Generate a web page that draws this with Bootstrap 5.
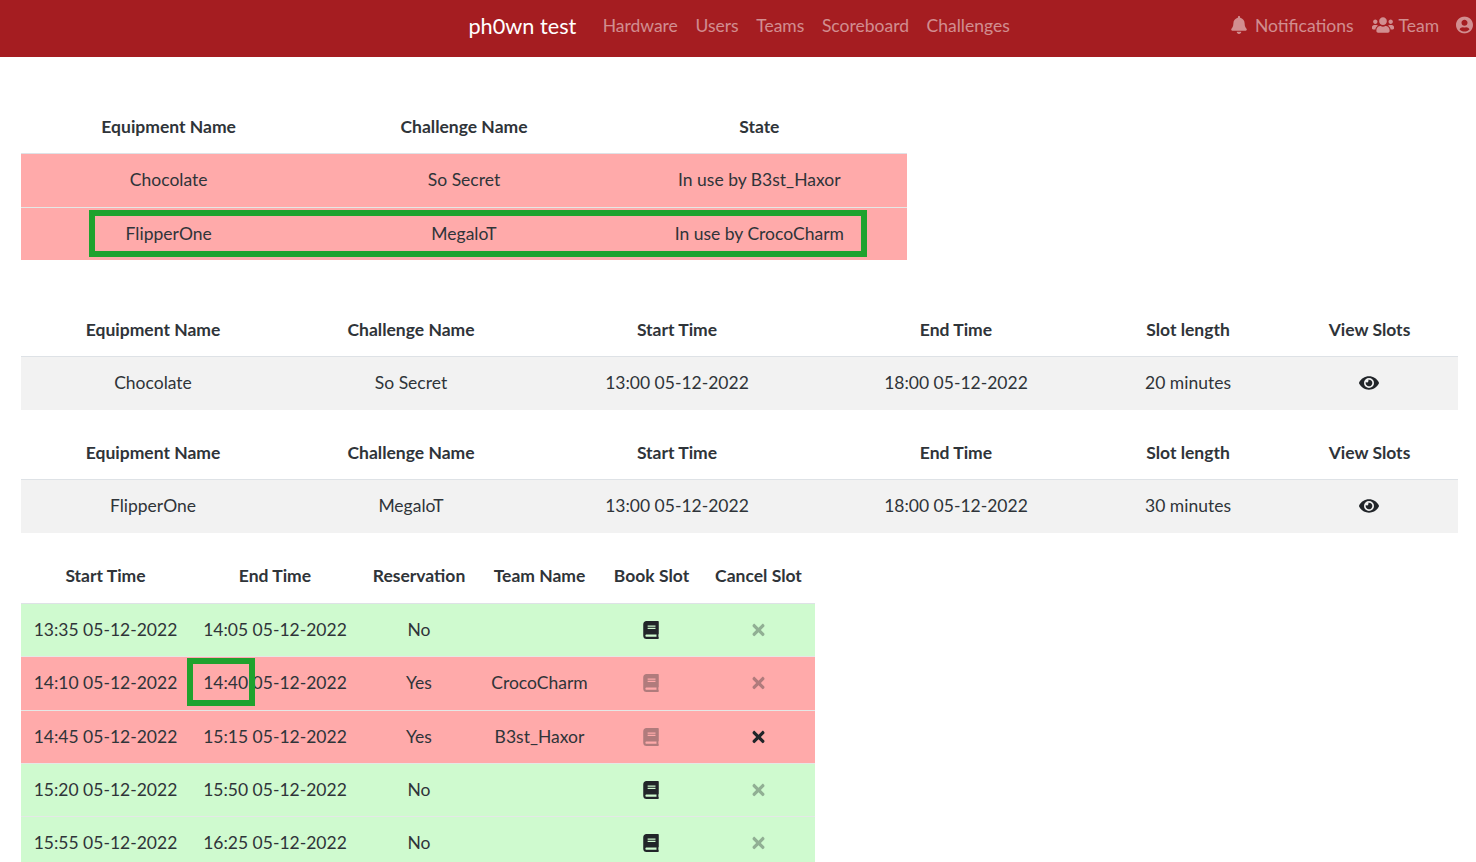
<!DOCTYPE html>
<html lang="en">
<head>
    <meta charset="UTF-8">
    <meta name="viewport" content="width=device-width, initial-scale=1.0">
    <title>ph0wn test - Hardware</title>

    <link rel="stylesheet" href="https://cdn.jsdelivr.net/npm/bootstrap@5.3.0/dist/css/bootstrap.min.css">

    <style>
        html, body {
            height: 862px;
            overflow: hidden;
        }
        body {
            font-family: "Lato", "Liberation Sans", sans-serif;
            font-size: 17.5px;
            color: #2f3439;
        }
        .top-bar {
            background-color: #a51d21;
            height: 57px;
            padding: 0 3px 5px 0;
            font-size: 17.5px;
        }
        .bar-side {
            flex: 1 1 0;
        }
        .bar-middle {
            padding-left: 14px;
        }
        .top-bar .navbar-brand {
            font-size: 21.7px;
            color: #fff;
            margin-right: 17.5px;
            padding: 0;
        }
        .top-bar .nav-link {
            color: rgba(255, 255, 255, 0.5);
            padding: 0 8.8px;
        }
        .top-bar .nav-link.user-link {
            padding: 0 0 0 8px;
        }
        .right-link {
            margin: 0 0.2px;
        }
        .nav-ico {
            height: 18px;
            fill: currentColor;
            vertical-align: -2px;
        }
        .ico-gap-lg { margin-right: 8px; }
        .ico-gap-sm { margin-right: 5px; }
        .page-wrap {
            padding: 44px 18px 0 21px;
        }
        .slot-table {
            table-layout: fixed;
            text-align: center;
            margin-bottom: 0;
            color: #2f3439;
            --bs-table-bg: transparent;
            --bs-table-color: #2f3439;
        }
        .slot-table th, .slot-table td {
            padding: 13px 0;
            vertical-align: middle;
        }
        .slot-table thead th {
            border-bottom: 1px solid #dee2e6;
            font-weight: 700;
        }
        .slot-table tbody td {
            border-bottom: 1px solid #e4e8e6;
        }
        .slot-table tbody tr:last-child td {
            border-bottom-color: transparent;
        }
        .table-state { width: 886px; }
        .table-info { width: 1437px; }
        .table-slots { width: 794px; }
        .table-slots thead th { padding-bottom: 14px; }
        .gap-state { margin-bottom: 43px; }
        .gap-info { margin-bottom: 16.5px; }
        .row-red > td { background-color: #ffaaaa; }
        .row-green > td { background-color: #cffacf; }
        .row-grey > td { background-color: #f2f2f2; }
        .c-state { width: 295.33px; }
        .c-i1 { width: 264px; }
        .c-i2 { width: 252px; }
        .c-i3 { width: 280px; }
        .c-i4 { width: 278px; }
        .c-i5 { width: 186px; }
        .c-i6 { width: 177px; }
        .c-s1 { width: 169px; }
        .c-s2 { width: 170px; }
        .c-s3 { width: 118px; }
        .c-s4 { width: 123px; }
        .c-s5 { width: 101px; }
        .c-s6 { width: 113px; }
        .act-ico {
            height: 18px;
            fill: #212529;
            vertical-align: -3px;
        }
        .act-off { opacity: 0.35; }
        .act-nudge { margin-right: 2px; }
        .mark-box {
            position: absolute;
            border: 6px solid #1fa22e;
            pointer-events: none;
        }
        .mark-row {
            left: 89px;
            top: 153px;
            width: 778px;
            height: 47px;
        }
        .mark-cell {
            left: 187px;
            top: 601px;
            width: 68px;
            height: 48px;
        }
    </style>
</head>
<body>

    <svg class="d-none" xmlns="http://www.w3.org/2000/svg">
        <symbol id="i-bell" viewBox="0 0 448 512"><path d="M224 512c35.32 0 63.97-28.65 63.97-64H160.03c0 35.35 28.65 64 63.97 64zm215.39-149.71c-19.32-20.76-55.47-51.99-55.47-154.29 0-77.7-54.48-139.9-127.94-155.16V32c0-17.67-14.32-32-31.98-32s-31.98 14.33-31.98 32v20.84C118.56 68.1 64.08 130.3 64.08 208c0 102.3-36.15 133.53-55.47 154.29-6 6.45-8.66 14.16-8.61 21.71.11 16.4 12.98 32 32.1 32h383.8c19.12 0 32-15.6 32.1-32 .05-7.55-2.61-15.27-8.61-21.71z"/></symbol>
        <symbol id="i-users" viewBox="0 0 640 512"><path d="M96 224c35.3 0 64-28.7 64-64s-28.7-64-64-64-64 28.7-64 64 28.7 64 64 64zm448 0c35.3 0 64-28.7 64-64s-28.7-64-64-64-64 28.7-64 64 28.7 64 64 64zm32 32h-64c-17.6 0-33.5 7.1-45.1 18.6 40.3 22.1 68.9 62 75.1 109.4h66c17.7 0 32-14.3 32-32v-32c0-35.3-28.7-64-64-64zm-256 0c61.9 0 112-50.1 112-112S381.9 32 320 32 208 82.1 208 144s50.1 112 112 112zm76.8 32h-8.3c-20.8 10-43.9 16-68.5 16s-47.6-6-68.5-16h-8.3C179.6 288 128 339.6 128 403.2V432c0 26.5 21.5 48 48 48h288c26.5 0 48-21.5 48-48v-28.8c0-63.6-51.6-115.2-115.2-115.2zm-223.7-13.4C161.5 263.1 145.6 256 128 256H64c-35.3 0-64 28.7-64 64v32c0 17.7 14.3 32 32 32h65.9c6.3-47.4 34.9-87.3 75.2-109.4z"/></symbol>
        <symbol id="i-user" viewBox="0 0 496 512"><path d="M248 8C111 8 0 119 0 256s111 248 248 248 248-111 248-248S385 8 248 8zm0 96c48.6 0 88 39.4 88 88s-39.4 88-88 88-88-39.4-88-88 39.4-88 88-88zm0 344c-58.7 0-111.3-26.6-146.5-68.2 18.8-35.4 55.6-59.8 98.5-59.8 2.4 0 4.8.4 7.1 1.1 13 4.2 26.6 6.9 40.9 6.9 14.3 0 28-2.7 40.9-6.9 2.3-.7 4.7-1.1 7.1-1.1 42.9 0 79.7 24.4 98.5 59.8C359.3 421.4 306.7 448 248 448z"/></symbol>
        <symbol id="i-eye" viewBox="0 0 576 512"><path d="M572.52 241.4C518.29 135.59 410.93 64 288 64S57.68 135.64 3.48 241.41a32.35 32.35 0 0 0 0 29.19C57.71 376.41 165.07 448 288 448s230.32-71.64 284.52-177.41a32.35 32.35 0 0 0 0-29.19zM288 400a144 144 0 1 1 144-144 143.93 143.93 0 0 1-144 144zm0-240a95.31 95.31 0 0 0-25.31 3.79 47.85 47.85 0 0 1-66.9 66.9A95.78 95.78 0 1 0 288 160z"/></symbol>
        <symbol id="i-book" viewBox="0 0 448 512"><path d="M448 360V24c0-13.3-10.7-24-24-24H96C43 0 0 43 0 96v320c0 53 43 96 96 96h328c13.3 0 24-10.7 24-24v-16c0-7.5-3.5-14.3-8.9-18.7-4.2-15.4-4.2-59.3 0-74.7 5.4-4.3 8.9-11.1 8.9-18.6zM128 134c0-3.3 2.7-6 6-6h212c3.3 0 6 2.7 6 6v20c0 3.3-2.7 6-6 6H134c-3.3 0-6-2.7-6-6v-20zm0 64c0-3.3 2.7-6 6-6h212c3.3 0 6 2.7 6 6v20c0 3.3-2.7 6-6 6H134c-3.3 0-6-2.7-6-6v-20zm253.4 250H96c-17.7 0-32-14.3-32-32 0-17.6 14.4-32 32-32h285.4c-1.9 17.1-1.9 46.9 0 64z"/></symbol>
        <symbol id="i-times" viewBox="0 0 352 512"><path d="M242.72 256l100.07-100.07c12.28-12.28 12.28-32.19 0-44.48l-22.24-22.24c-12.28-12.28-32.19-12.28-44.48 0L176 189.28 75.93 89.21c-12.28-12.28-32.19-12.28-44.48 0L9.21 111.45c-12.28 12.28-12.28 32.19 0 44.48L109.28 256 9.21 356.07c-12.28 12.28-12.28 32.19 0 44.48l22.24 22.24c12.28 12.28 32.2 12.28 44.48 0L176 322.72l100.07 100.07c12.28 12.28 32.2 12.28 44.48 0l22.24-22.24c12.28-12.28 12.28-32.19 0-44.48L242.72 256z"/></symbol>
    </svg>

    <!-- Navbar -->
    <nav class="navbar top-bar d-flex flex-nowrap align-items-center">
        <div class="bar-side"></div>
        <div class="bar-middle d-flex align-items-center">
            <a class="navbar-brand" href="#">ph0wn test</a>
            <ul class="navbar-nav flex-row">
                <li class="nav-item"><a class="nav-link" href="#">Hardware</a></li>
                <li class="nav-item"><a class="nav-link" href="#">Users</a></li>
                <li class="nav-item"><a class="nav-link" href="#">Teams</a></li>
                <li class="nav-item"><a class="nav-link" href="#">Scoreboard</a></li>
                <li class="nav-item"><a class="nav-link" href="#">Challenges</a></li>
            </ul>
        </div>
        <div class="bar-side d-flex justify-content-end">
            <ul class="navbar-nav flex-row">
                <li class="nav-item right-link"><a class="nav-link" href="#"><svg class="nav-ico ico-gap-lg" viewBox="0 0 448 512" width="16"><use href="#i-bell"/></svg>Notifications</a></li>
                <li class="nav-item right-link"><a class="nav-link" href="#"><svg class="nav-ico ico-gap-sm" viewBox="0 0 640 512" width="22"><use href="#i-users"/></svg>Team</a></li>
                <li class="nav-item"><a class="nav-link user-link" href="#"><svg class="nav-ico" viewBox="0 0 496 512" width="17"><use href="#i-user"/></svg></a></li>
            </ul>
        </div>
    </nav>

    <div class="page-wrap position-relative">

        <!-- Equipment state -->
        <table class="table slot-table table-state gap-state">
            <colgroup><col class="c-state"><col class="c-state"><col class="c-state"></colgroup>
            <thead>
                <tr><th>Equipment Name</th><th>Challenge Name</th><th>State</th></tr>
            </thead>
            <tbody>
                <tr class="row-red"><td>Chocolate</td><td>So Secret</td><td>In use by B3st_Haxor</td></tr>
                <tr class="row-red"><td>FlipperOne</td><td>MegaloT</td><td>In use by CrocoCharm</td></tr>
            </tbody>
        </table>

        <!-- Challenge slots -->
        <table class="table slot-table table-info gap-info">
            <colgroup><col class="c-i1"><col class="c-i2"><col class="c-i3"><col class="c-i4"><col class="c-i5"><col class="c-i6"></colgroup>
            <thead>
                <tr><th>Equipment Name</th><th>Challenge Name</th><th>Start Time</th><th>End Time</th><th>Slot length</th><th>View Slots</th></tr>
            </thead>
            <tbody>
                <tr class="row-grey"><td>Chocolate</td><td>So Secret</td><td>13:00 05-12-2022</td><td>18:00 05-12-2022</td><td>20 minutes</td><td><svg class="act-ico act-nudge" viewBox="0 0 576 512" width="20"><use href="#i-eye"/></svg></td></tr>
            </tbody>
        </table>

        <table class="table slot-table table-info gap-info">
            <colgroup><col class="c-i1"><col class="c-i2"><col class="c-i3"><col class="c-i4"><col class="c-i5"><col class="c-i6"></colgroup>
            <thead>
                <tr><th>Equipment Name</th><th>Challenge Name</th><th>Start Time</th><th>End Time</th><th>Slot length</th><th>View Slots</th></tr>
            </thead>
            <tbody>
                <tr class="row-grey"><td>FlipperOne</td><td>MegaloT</td><td>13:00 05-12-2022</td><td>18:00 05-12-2022</td><td>30 minutes</td><td><svg class="act-ico act-nudge" viewBox="0 0 576 512" width="20"><use href="#i-eye"/></svg></td></tr>
            </tbody>
        </table>

        <!-- Booking slots -->
        <table class="table slot-table table-slots">
            <colgroup><col class="c-s1"><col class="c-s2"><col class="c-s3"><col class="c-s4"><col class="c-s5"><col class="c-s6"></colgroup>
            <thead>
                <tr><th>Start Time</th><th>End Time</th><th>Reservation</th><th>Team Name</th><th>Book Slot</th><th>Cancel Slot</th></tr>
            </thead>
            <tbody>
                <tr class="row-green"><td>13:35 05-12-2022</td><td>14:05 05-12-2022</td><td>No</td><td></td><td><svg class="act-ico act-nudge" viewBox="0 0 448 512" width="16"><use href="#i-book"/></svg></td><td><svg class="act-ico act-off" viewBox="0 0 352 512" width="13"><use href="#i-times"/></svg></td></tr>
                <tr class="row-red"><td>14:10 05-12-2022</td><td>14:40 05-12-2022</td><td>Yes</td><td>CrocoCharm</td><td><svg class="act-ico act-off act-nudge" viewBox="0 0 448 512" width="16"><use href="#i-book"/></svg></td><td><svg class="act-ico act-off" viewBox="0 0 352 512" width="13"><use href="#i-times"/></svg></td></tr>
                <tr class="row-red"><td>14:45 05-12-2022</td><td>15:15 05-12-2022</td><td>Yes</td><td>B3st_Haxor</td><td><svg class="act-ico act-off act-nudge" viewBox="0 0 448 512" width="16"><use href="#i-book"/></svg></td><td><svg class="act-ico" viewBox="0 0 352 512" width="13"><use href="#i-times"/></svg></td></tr>
                <tr class="row-green"><td>15:20 05-12-2022</td><td>15:50 05-12-2022</td><td>No</td><td></td><td><svg class="act-ico act-nudge" viewBox="0 0 448 512" width="16"><use href="#i-book"/></svg></td><td><svg class="act-ico act-off" viewBox="0 0 352 512" width="13"><use href="#i-times"/></svg></td></tr>
                <tr class="row-green"><td>15:55 05-12-2022</td><td>16:25 05-12-2022</td><td>No</td><td></td><td><svg class="act-ico act-nudge" viewBox="0 0 448 512" width="16"><use href="#i-book"/></svg></td><td><svg class="act-ico act-off" viewBox="0 0 352 512" width="13"><use href="#i-times"/></svg></td></tr>
            </tbody>
        </table>

        <!-- Green highlight boxes drawn over the tables -->
        <div class="mark-box mark-row"></div>
        <div class="mark-box mark-cell"></div>
    </div>

    <script src="https://cdn.jsdelivr.net/npm/bootstrap@5.3.0/dist/js/bootstrap.bundle.min.js"></script>

</body>
</html>
